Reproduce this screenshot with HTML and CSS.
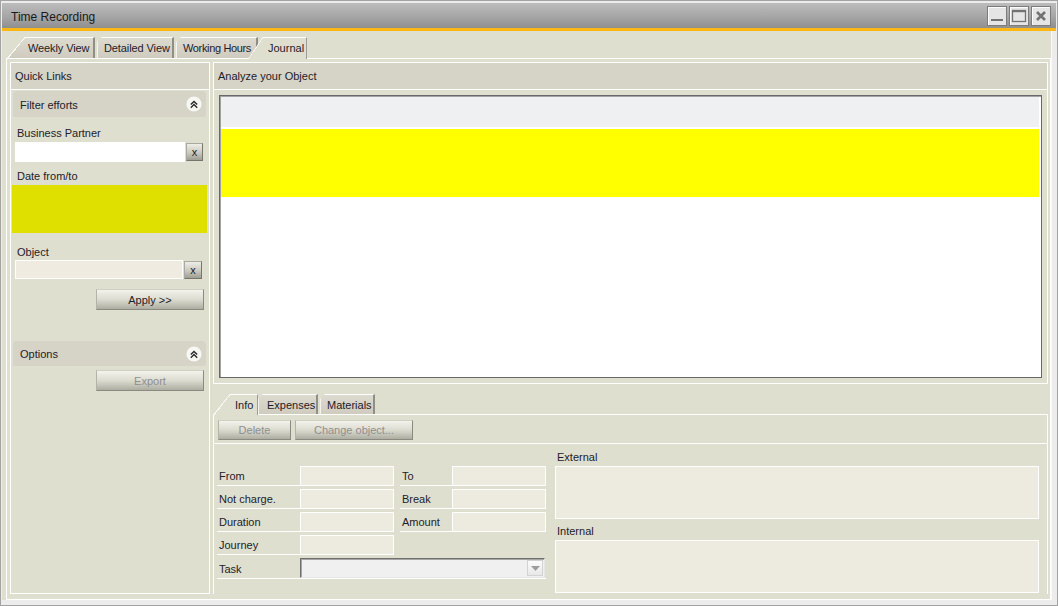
FILE: index.html
```html
<!DOCTYPE html>
<html>
<head>
<meta charset="utf-8">
<title>Time Recording</title>
<link rel="stylesheet" href="styles.css">
</head>
<body>
<div class="window">
  <div class="titlebar">
    <span class="title">Time Recording</span>
    <div class="wincontrols">
      <span class="wbtn"><svg width="18" height="18" viewBox="0 0 18 18"><rect x="3" y="12" width="12" height="2" fill="#727272"/></svg></span>
      <span class="wbtn"><svg width="18" height="18" viewBox="0 0 18 18"><rect x="2.5" y="3.5" width="13" height="11" fill="none" stroke="#727272" stroke-width="1.3"/><rect x="2" y="3" width="14" height="2.2" fill="#727272"/></svg></span>
      <span class="wbtn"><svg width="18" height="18" viewBox="0 0 18 18"><path d="M5 5 L13 13 M13 5 L5 13" stroke="#737373" stroke-width="2.6" fill="none"/></svg></span>
    </div>
  </div>
  <div class="accent"></div>
  <div class="client">
    <div class="tabs">
      <div class="tab tab-first">Weekly View</div>
      <div class="tab tab-mid tab-detailed">Detailed View</div>
      <div class="tab tab-mid tab-hours">Working Hours</div>
      <div class="tab tab-active tab-journal">Journal</div>
    </div>
    <div class="page">
      <aside class="left">
        <div class="hdr">Quick Links</div>
        <div class="sect-hdr">
          <span>Filter efforts</span>
          <svg class="collapse" width="16" height="16" viewBox="0 0 16 16"><circle cx="8" cy="8" r="7.6" fill="#f7f7f4"/><path d="M4.8 8.6 L8 5.4 L11.2 8.6 M4.8 11.8 L8 8.6 L11.2 11.8" fill="none" stroke="#2b2b2b" stroke-width="1.4"/></svg>
        </div>
        <div class="lbl lbl-bp">Business Partner</div>
        <div class="inrow">
          <div class="field field-white"></div>
          <div class="xbtn">x</div>
        </div>
        <div class="lbl lbl-date">Date from/to</div>
        <div class="datebox"></div>
        <div class="lbl lbl-obj">Object</div>
        <div class="inrow inrow-obj">
          <div class="field field-beige"></div>
          <div class="xbtn">x</div>
        </div>
        <div class="btn btn-apply">Apply &gt;&gt;</div>
        <div class="sect-hdr sect-options">
          <span>Options</span>
          <svg class="collapse" width="16" height="16" viewBox="0 0 16 16"><circle cx="8" cy="8" r="7.6" fill="#f7f7f4"/><path d="M4.8 8.6 L8 5.4 L11.2 8.6 M4.8 11.8 L8 8.6 L11.2 11.8" fill="none" stroke="#2b2b2b" stroke-width="1.4"/></svg>
        </div>
        <div class="btn btn-export disabled">Export</div>
      </aside>
      <main class="right">
        <section class="analyze">
          <div class="hdr">Analyze your Object</div>
          <div class="gridbox">
            <div class="ghead"></div>
            <div class="grow"></div>
          </div>
        </section>
        <div class="itabs">
          <div class="tab tab-active tab-info">Info</div>
          <div class="tab tab-mid tab-exp">Expenses</div>
          <div class="tab tab-mid tab-mat">Materials</div>
        </div>
        <section class="ipanel">
          <div class="toolbar">
            <div class="btn disabled btn-delete">Delete</div>
            <div class="btn disabled btn-change">Change object...</div>
          </div>
          <div class="formarea">
            <div class="fleft">
              <div class="frow">
                <div class="flbl">From</div><div class="finput"></div>
                <div class="fgap"></div>
                <div class="flbl flbl2">To</div><div class="finput"></div>
              </div>
              <div class="frow">
                <div class="flbl">Not charge.</div><div class="finput"></div>
                <div class="fgap"></div>
                <div class="flbl flbl2">Break</div><div class="finput"></div>
              </div>
              <div class="frow">
                <div class="flbl">Duration</div><div class="finput"></div>
                <div class="fgap"></div>
                <div class="flbl flbl2">Amount</div><div class="finput"></div>
              </div>
              <div class="frow">
                <div class="flbl">Journey</div><div class="finput"></div>
              </div>
              <div class="frow frow-task">
                <div class="flbl">Task</div>
                <div class="combo">
                  <div class="combo-btn"><svg width="9" height="5" viewBox="0 0 9 5"><path d="M0 0 L9 0 L4.5 5 Z" fill="#9d9d9d"/></svg></div>
                </div>
              </div>
            </div>
            <div class="fright">
              <div class="tlbl">External</div>
              <div class="tarea"></div>
              <div class="tlbl tlbl-int">Internal</div>
              <div class="tarea"></div>
            </div>
          </div>
        </section>
      </main>
    </div>
  </div>
</div>
</body>
</html>
```

FILE: styles.css
```css
* { box-sizing: border-box; }
html, body { margin: 0; padding: 0; }
body {
  font-family: "Liberation Sans", Arial, sans-serif;
  font-size: 11px;
  color: #1e2129;
  background: #ececec;
}

.window {
  width: 1058px;
  height: 606px;
  border: 1px solid #a3a3a3;
  padding: 2px 1px 0 1px;
  background: #ececec;
  display: flex;
  flex-direction: column;
  overflow: hidden;
}

.titlebar {
  flex: none;
  height: 25px;
  background: linear-gradient(#bcbcbc, #a6a6a6 55%, #8f8f8f);
  display: flex;
  align-items: center;
  justify-content: space-between;
  padding: 0 5px 0 9px;
}
.title { font-size: 12px; color: #1a1a1a; padding-top: 2px; }
.wincontrols { display: flex; gap: 2px; margin-top: 1px; }
.wbtn {
  width: 20px;
  height: 20px;
  border: 1px solid #7c7c7c;
  background: #e5e5e5;
  box-shadow: inset 1px 1px 0 #fbfbfb;
  display: flex;
}
.wbtn svg { display: block; }

.accent { flex: none; height: 3px; background: #fbb714; }

.client {
  flex: none;
  width: 1050px;
  height: 569px;
  background: #dfdfd0;
  padding-left: 4px;
  display: flex;
  flex-direction: column;
  border-right: 1px solid #fbfbf6;
}

/* ---------- tabs ---------- */
.tabs {
  flex: none;
  display: flex;
  align-items: flex-end;
  height: 21px;
  margin-top: 6px;
  padding-left: 1px;
}
.tab {
  position: relative;
  height: 21px;
  line-height: 21px;
  white-space: nowrap;
  border-top: 1px solid #fff;
  border-right: 2px solid #8f8f86;
  background: linear-gradient(#dddacf, #cfcbbf);
  color: #1e2129;
}
.tab-first {
  width: 88px;
  padding-left: 21px;
  letter-spacing: -0.1px;
  clip-path: polygon(0 100%, 18px 0, 100% 0, 100% 100%);
}
.tab-first::before,
.tab-active::before {
  content: "";
  position: absolute;
  left: 0;
  top: -1px;
  width: 18px;
  height: 22px;
  background: linear-gradient(to bottom right, transparent calc(50% - 1.2px), #fff calc(50% - 1.2px), #fff calc(50% + 0.6px), transparent calc(50% + 0.6px));
}
.tab-mid {
  border-left: 1px solid #f4f4ee;
  clip-path: polygon(0 5px, 5px 0, 100% 0, 100% 100%, 0 100%);
}
.tab-detailed { width: 77px; margin-left: 2px; padding-left: 6px; letter-spacing: -0.1px; }
.tab-hours { width: 82px; margin-left: 2px; padding-left: 6px; letter-spacing: -0.35px; }
.tab-active {
  z-index: 2;
  background: #dfdfd0;
  border-right: 1px solid #9d9d95;
  clip-path: polygon(0 100%, 15px 0, 100% 0, 100% 100%);
}
.tab-active::before { width: 15px; }
.tab-journal {
  width: 59px;
  height: 22px;
  margin-left: -10px;
  margin-bottom: -1px;
  padding-left: 20px;
}

/* ---------- page ---------- */
.page {
  flex: 1;
  width: 1045px;
  border: 1px solid #fff;
  display: flex;
  gap: 3px;
  padding: 3px 2px 5px 3px;
  min-height: 0;
}

.left {
  flex: none;
  width: 200px;
  border: 1px solid #fff;
  display: flex;
  flex-direction: column;
}
.hdr {
  flex: none;
  height: 27px;
  line-height: 27px;
  padding-left: 4px;
  background: #d6d3c7;
  border-bottom: 1px solid #fff;
}
.sect-hdr {
  flex: none;
  height: 26px;
  margin: 1px 3px 0 2px;
  padding: 0 4px 0 7px;
  background: #d6d3c7;
  border-radius: 4px 4px 2px 2px;
  display: flex;
  align-items: center;
  justify-content: space-between;
}
.sect-hdr span { padding-top: 1px; }
.collapse { display: block; }
.sect-options { height: 25px; margin-top: 31px; }

.lbl { line-height: 14px; padding-left: 6px; padding-top: 1px; height: 14px; }
.lbl-bp { margin-top: 8px; }
.lbl-date { margin-top: 6px; }
.lbl-obj { margin-top: 11px; }

.inrow {
  display: flex;
  align-items: center;
  height: 20px;
  margin: 3px 0 0 4px;
}
.inrow-obj { height: 19px; margin-top: 2px; }
.field { height: 100%; }
.field-white { width: 170px; background: #fff; }
.field-beige { width: 168px; background: #efebe0; border: 1px solid #fff; }
.xbtn {
  width: 17px;
  height: 18px;
  margin-left: 1px;
  border: 1px solid #76766d;
  border-top-color: #a9a99f;
  border-left-color: #a9a99f;
  background: linear-gradient(#eeeee8, #c9c9bf 55%, #9e9e94);
  text-align: center;
  line-height: 16px;
  font-size: 11px;
  color: #1e2129;
}
.inrow-obj .xbtn { width: 18px; }

.datebox {
  flex: none;
  height: 48px;
  margin: 3px 2px 0 1px;
  background: #e0e000;
}

.btn {
  height: 21px;
  line-height: 20px;
  text-align: center;
  border: 1px solid #8a8a80;
  border-top-color: #cfcfc4;
  border-left-color: #b3b3a9;
  background: linear-gradient(#f4f3ec, #dcdbd0 50%, #adada2);
  color: #1e2129;
  white-space: nowrap;
}
.btn.disabled { color: #8f8f8f; }
.btn-apply {
  width: 108px;
  margin: 10px 0 0 85px;
}
.btn-export {
  width: 108px;
  margin: 4px 0 0 85px;
}

/* ---------- right column ---------- */
.right {
  flex: 1;
  display: flex;
  flex-direction: column;
  min-width: 0;
}
.analyze {
  flex: none;
  height: 322px;
  border: 1px solid #fff;
  display: flex;
  flex-direction: column;
}
.gridbox {
  flex: 1;
  margin: 5px;
  border: 1px solid #686868;
  box-shadow: inset 1px 1px 0 #a2a2a2;
  background: #fff;
  padding: 1px 2px 0 1px;
}
.ghead { height: 30px; background: #eff0f2; }
.grow { height: 68px; margin-top: 2px; background: #ffff00; }

.itabs {
  flex: none;
  display: flex;
  align-items: flex-end;
  height: 20px;
  margin-top: 10px;
}
.itabs .tab { height: 20px; line-height: 21px; }
.tab-info {
  width: 45px;
  height: 21px !important;
  margin-bottom: -1px;
  padding-left: 22px;
  clip-path: polygon(0 100%, 17px 0, 100% 0, 100% 100%);
}
.tab-info::before { width: 17px; }
.tab-exp { width: 60px; padding-left: 8px; }
.tab-mat { width: 55px; margin-left: 2px; padding-left: 6px; }

.ipanel {
  flex: 1;
  border: 1px solid #fff;
  border-bottom: none;
  display: flex;
  flex-direction: column;
}
.toolbar {
  flex: none;
  height: 29px;
  padding: 5px 0 0 4px;
  display: flex;
  gap: 4px;
  border-bottom: 1px solid #fff;
}
.btn-delete { width: 73px; height: 20px; line-height: 19px; }
.btn-change { width: 118px; height: 20px; line-height: 19px; }

.formarea {
  flex: 1;
  display: flex;
  gap: 9px;
  padding: 0 8px 0 3px;
}
.fleft {
  flex: none;
  width: 329px;
  padding-top: 22px;
}
.frow {
  display: flex;
  height: 20px;
  margin-bottom: 3px;
}
.flbl {
  width: 83px;
  padding: 2px 0 0 2px;
  line-height: 17px;
  border-bottom: 1px solid #fff;
}
.flbl2 { width: 52px; }
.finput {
  width: 94px;
  height: 20px;
  border: 1px solid #fff;
  background: #edeadf;
}
.fgap { width: 6px; }

.frow-task { height: 21px; border-bottom: 1px solid #fff; }
.frow-task .flbl { border-bottom: none; line-height: 18px; }
.combo {
  width: 245px;
  height: 20px;
  border: 1px solid #6f6f6f;
  border-right-color: #e6e6e6;
  border-bottom-color: #e6e6e6;
  box-shadow: inset 1px 1px 0 #a5a5a5;
  background: #f0f0f0;
  display: flex;
  justify-content: flex-end;
  align-items: center;
  padding-right: 1px;
}
.combo-btn {
  width: 16px;
  height: 16px;
  border: 1px solid #d3d3d3;
  background: linear-gradient(#fbfbfb, #e8e8e8);
  display: flex;
  align-items: center;
  justify-content: center;
}
.combo-btn svg { display: block; }

.fright {
  flex: 1;
  padding-top: 5px;
}
.tlbl { line-height: 14px; height: 14px; padding-top: 1px; margin-bottom: 3px; padding-left: 2px; }
.tlbl-int { margin-top: 4px; }
.tarea {
  height: 53px;
  border: 1px solid #fff;
  background: #edeadf;
}
```
